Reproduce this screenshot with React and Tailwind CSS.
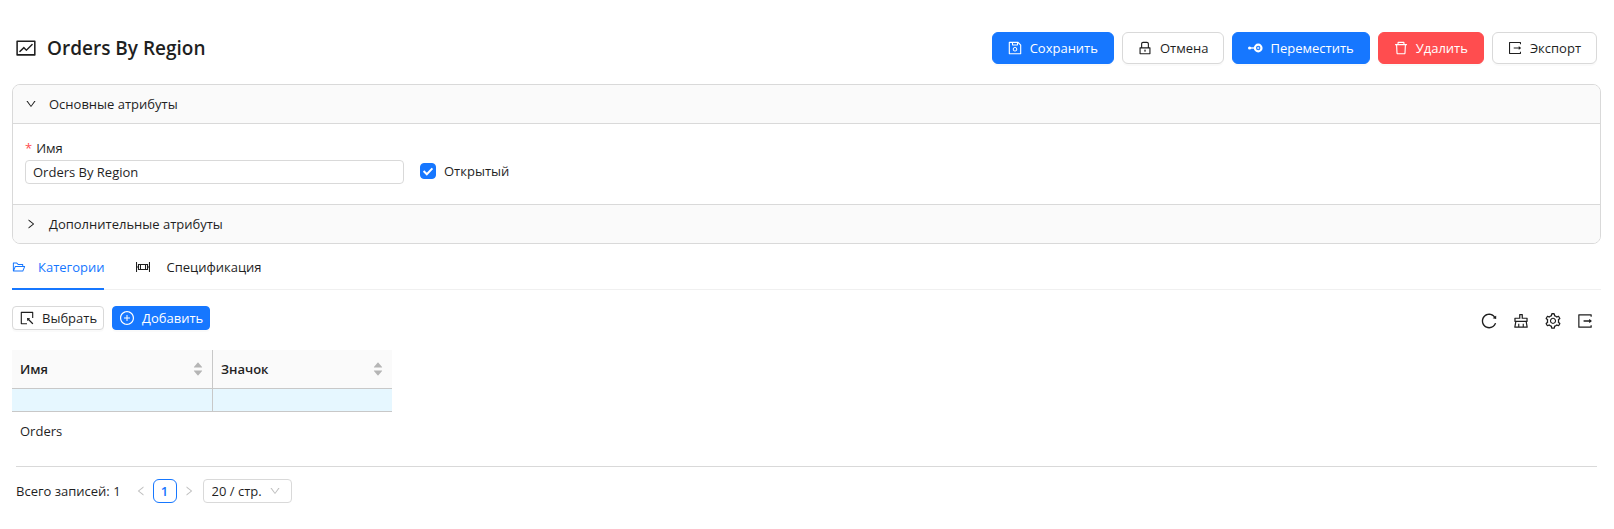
import React, { useState } from "react";
import {
  AiOutlineFund,
  AiOutlineSave,
  AiOutlineLock,
  AiOutlineDelete,
  AiOutlineSelect,
  AiOutlinePlusCircle,
  AiOutlineReload,
  AiOutlineClear,
  AiOutlineSetting,
  AiOutlineFolderOpen,
  AiOutlineDown,
  AiOutlineRight,
  AiOutlineLeft,
  AiFillCaretUp,
  AiFillCaretDown,
} from "react-icons/ai";

function MoveIcon() {
  return (
    <svg width="16" height="16" viewBox="0 0 16 16" fill="none" stroke="currentColor" aria-hidden="true">
      <circle cx="2.6" cy="8" r="1.6" fill="currentColor" stroke="none" />
      <path d="M2 8h6" strokeWidth="1.4" />
      <circle cx="11.2" cy="8" r="3.3" strokeWidth="2.2" />
      <path d="M11.2 6.8v2.4M10 8h2.4" strokeWidth="0.8" />
    </svg>
  );
}

function ExportIcon({ size }) {
  return (
    <svg width={size} height={size} viewBox="0 0 1024 1024" fill="currentColor" aria-hidden="true">
      <path d="M888.3 757.4h-53.8c-4.2 0-7.7 3.5-7.7 7.7v61.8H197.1V197.1h629.8v61.8c0 4.2 3.5 7.7 7.7 7.7h53.8c4.2 0 7.7-3.4 7.7-7.7V158.7c0-17-13.7-30.7-30.7-30.7H158.7c-17 0-30.7 13.7-30.7 30.7v706.6c0 17 13.7 30.7 30.7 30.7h706.6c17 0 30.7-13.7 30.7-30.7V765.1c0-4.3-3.5-7.7-7.7-7.7z" />
      <path d="M906.9 505.7L765 393.7c-5.3-4.2-13-.4-13 6.3v76H438c-4.4 0-8 3.6-8 8v56c0 4.4 3.6 8 8 8h314v76c0 6.7 7.8 10.5 13 6.3l141.9-112a8 8 0 0 0 0-12.6z" />
    </svg>
  );
}

function SpecIcon() {
  return (
    <svg width="14" height="14" viewBox="0 0 14 14" fill="none" stroke="currentColor" aria-hidden="true">
      <path d="M0.5 2v10M13.5 2v10" strokeWidth="1.1" />
      <path d="M2.5 4.5h9v5h-9z" strokeWidth="1.1" />
      <path d="M4.5 4v6M9.5 4v6" />
      <path d="M0.5 7h2M11.5 7h2" />
    </svg>
  );
}

const variants = {
  primary: "border-[#1677ff] bg-[#1677ff] text-white",
  danger: "border-[#ff4d4f] bg-[#ff4d4f] text-white",
  plain: "border-[#d9d9d9] bg-white text-[#1f1f1f]",
};

function Button({ icon, variant = "plain", small = false, children }) {
  const size = small ? "h-6 rounded px-1.5" : "h-8 rounded-md pl-3.5 pr-[15px]";
  return (
    <button
      type="button"
      className={`flex shrink-0 items-center gap-[7px] border whitespace-nowrap shadow-[0_2px_0_rgba(0,0,0,0.02)] ${size} ${variants[variant]}`}
    >
      {icon}
      <span>{children}</span>
    </button>
  );
}

function ToolButton({ label, children }) {
  return (
    <button type="button" aria-label={label} className="text-[#1f1f1f]">
      {children}
    </button>
  );
}

function ColumnHeader({ title, className }) {
  return (
    <th scope="col" className={`h-[39px] border-b border-[#c8c8c8] bg-[#fafafa] px-2 text-left font-semibold ${className}`}>
      <div className="flex items-center justify-between">
        <span>{title}</span>
        <button type="button" aria-label={`Сортировать: ${title}`} className="flex flex-col text-[#b5b5b5]">
          <AiFillCaretUp size={12} className="-mb-[2px]" />
          <AiFillCaretDown size={12} className="-mt-[2px]" />
        </button>
      </div>
    </th>
  );
}

export default function App() {
  const [name, setName] = useState("Orders By Region");
  const [open, setOpen] = useState(true);

  return (
    <main className="bg-white pt-8 pr-[13px] pb-6 pl-3 font-['Open_Sans','Noto_Sans',sans-serif] text-[13px] leading-[22px] text-[#1f1f1f]">
      <header className="flex items-center justify-between pr-1 pl-[3px]">
        <div className="flex items-center gap-[10px]">
          <AiOutlineFund size={22} />
          <h1 className="text-[19px] leading-8 font-semibold">Orders By Region</h1>
        </div>
        <div className="flex gap-2">
          <Button variant="primary" icon={<AiOutlineSave size={16} />}>Сохранить</Button>
          <Button icon={<AiOutlineLock size={16} />}>Отмена</Button>
          <Button variant="primary" icon={<MoveIcon />}>Переместить</Button>
          <Button variant="danger" icon={<AiOutlineDelete size={16} />}>Удалить</Button>
          <Button icon={<ExportIcon size={16} />}>Экспорт</Button>
        </div>
      </header>

      <section className="mt-5 overflow-hidden rounded-lg border border-[#d9d9d9]">
        <button type="button" aria-expanded="true" className="flex h-[39px] w-full items-center gap-3 border-b border-[#d9d9d9] bg-[#fafafa] px-3 text-left">
          <AiOutlineDown size={12} />
          <span>Основные атрибуты</span>
        </button>
        <div className="flex items-end gap-4 px-3 pt-3 pb-5">
          <div className="w-[379px]">
            <label htmlFor="name" className="flex h-6 items-center gap-1">
              <span className="text-[#ff4d4f]">*</span>
              Имя
            </label>
            <input
              id="name"
              value={name}
              onChange={(e) => setName(e.target.value)}
              className="block h-6 w-full rounded border border-[#d9d9d9] bg-white px-[7px] outline-none"
            />
          </div>
          <label className="flex h-[26px] items-center gap-2">
            <span className="relative flex size-4">
              <input
                type="checkbox"
                checked={open}
                onChange={(e) => setOpen(e.target.checked)}
                className="peer size-4 appearance-none rounded border border-[#d9d9d9] checked:border-[#1677ff] checked:bg-[#1677ff]"
              />
              <svg viewBox="0 0 16 16" className="pointer-events-none absolute inset-0 hidden size-4 peer-checked:block" fill="none" stroke="#fff" strokeWidth="2" aria-hidden="true">
                <path d="M3.6 8l3.2 3.2L12.4 5.4" />
              </svg>
            </span>
            Открытый
          </label>
        </div>
        <button type="button" aria-expanded="false" className="flex h-[39px] w-full items-center gap-3 border-t border-[#d9d9d9] bg-[#fafafa] px-3 text-left">
          <AiOutlineRight size={12} />
          <span>Дополнительные атрибуты</span>
        </button>
      </section>

      <div role="tablist" className="flex gap-8 border-b border-[#f0f0f0]">
        <button type="button" role="tab" aria-selected="true" className="-mb-px flex h-[46px] items-center gap-3 border-b-2 border-[#1677ff] pt-0.5 text-[#1677ff]">
          <AiOutlineFolderOpen size={14} />
          Категории
        </button>
        <button type="button" role="tab" aria-selected="false" className="-mb-px flex h-[46px] items-center gap-4 border-b-2 border-transparent pt-0.5">
          <SpecIcon />
          Спецификация
        </button>
      </div>

      <div className="mt-4 flex justify-between">
        <div className="flex gap-2">
          <Button small icon={<AiOutlineSelect size={16} />}>Выбрать</Button>
          <Button small variant="primary" icon={<AiOutlinePlusCircle size={16} />}>Добавить</Button>
        </div>
        <div className="flex h-[30px] items-center gap-3.5 pr-[7px]">
          <ToolButton label="Обновить"><AiOutlineReload size={18} /></ToolButton>
          <ToolButton label="Очистить"><AiOutlineClear size={18} /></ToolButton>
          <ToolButton label="Настройки"><AiOutlineSetting size={18} /></ToolButton>
          <ToolButton label="Экспорт"><ExportIcon size={18} /></ToolButton>
        </div>
      </div>

      <table className="mt-3.5 w-[380px] table-fixed border-separate border-spacing-0">
        <thead>
          <tr>
            <ColumnHeader title="Имя" className="w-[201px] border-r" />
            <ColumnHeader title="Значок" className="" />
          </tr>
          <tr>
            <td className="h-[23px] border-r border-b border-[#c8c8c8] bg-[#e6f7ff]" />
            <td className="h-[23px] border-b border-[#c8c8c8] bg-[#e6f7ff]" />
          </tr>
        </thead>
        <tbody>
          <tr>
            <td className="h-[38px] px-2">Orders</td>
            <td className="px-2" />
          </tr>
        </tbody>
      </table>

      <footer className="mx-1 mt-4 flex items-center border-t border-[#d9d9d9] pt-3">
        <span>Всего записей: 1</span>
        <nav aria-label="Страницы" className="ml-2 flex items-center">
          <button type="button" aria-label="Назад" disabled className="flex size-6 items-center justify-center text-[#bfbfbf]">
            <AiOutlineLeft size={12} />
          </button>
          <button type="button" aria-current="page" className="flex size-6 items-center justify-center rounded-md border border-[#1677ff] font-semibold text-[#1677ff]">
            1
          </button>
          <button type="button" aria-label="Вперёд" disabled className="flex size-6 items-center justify-center text-[#bfbfbf]">
            <AiOutlineRight size={12} />
          </button>
        </nav>
        <div className="relative ml-0.5">
          <select aria-label="Записей на странице" className="h-6 w-[89px] appearance-none rounded border border-[#d9d9d9] bg-white pl-2 leading-5">
            <option>20 / стр.</option>
            <option>50 / стр.</option>
          </select>
          <AiOutlineDown size={12} className="pointer-events-none absolute top-[6px] right-[11px] text-[#bfbfbf]" />
        </div>
      </footer>
    </main>
  );
}
